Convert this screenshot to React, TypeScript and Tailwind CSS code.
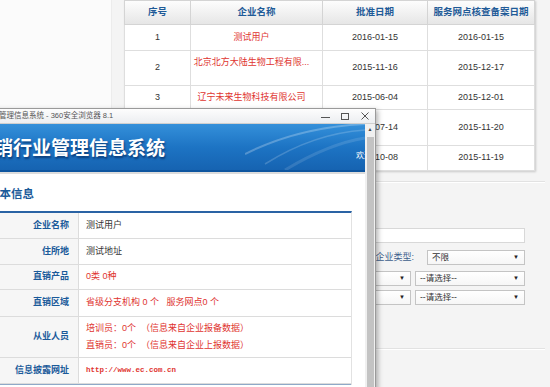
import React from 'react';

interface Row {
  no: number;
  name: string;
  approved: string;
  checked: string;
  h: string;
  lift?: boolean;
}

const rows: Row[] = [
  { no: 1, name: '测试用户', approved: '2016-01-15', checked: '2016-01-15', h: 'h-[26px]' },
  { no: 2, name: '北京北方大陆生物工程有限...', approved: '2015-11-16', checked: '2015-12-17', h: 'h-[35px]', lift: true },
  { no: 3, name: '辽宁未来生物科技有限公司', approved: '2015-06-04', checked: '2015-12-01', h: 'h-[24px]' },
  { no: 4, name: '吉林省康源生物技术有限...', approved: '2015-07-14', checked: '2015-11-20', h: 'h-[36px]', lift: true },
  { no: 5, name: '天津天狮生物发展有限公司', approved: '2015-10-08', checked: '2015-11-19', h: 'h-[25px]' },
];

const Select = ({ text, className = '' }: { text: string; className?: string }) => (
  <div
    className={`h-[15px] flex items-center justify-between border border-[#c4c4c4] bg-gradient-to-b from-white to-[#f6f6f6] pl-[4px] pr-[5px] text-[8.5px] text-[#333] ${className}`}
  >
    <span>{text}</span>
    <span className="text-[6px] text-[#222]">▼</span>
  </div>
);

const InfoRow = ({ label, h, children }: { label: string; h: string; children: React.ReactNode }) => (
  <div className={`flex border-b border-[#dcdcdc] ${h}`}>
    <div className="w-[91px] shrink-0 bg-[#f6f6f6] border-r border-[#dcdcdc] flex items-center justify-end pr-[9px] text-[9px] font-bold text-[#1a5a9a]">
      {label}
    </div>
    <div className="flex-1 flex flex-col justify-center pl-[7px] text-[9px] gap-[4px]">{children}</div>
  </div>
);

export default function App() {
  return (
    <div className="relative w-[550px] h-[387px] overflow-hidden bg-[#f4f4f4] font-['Liberation_Sans','Noto_Sans_CJK_SC',sans-serif]">
      {/* background page */}
      <div className="flex h-full">
        <div className="w-[112px] shrink-0 bg-[#fbfbfb] border-r border-[#ececec]" />
        <div className="flex-1 pl-[12px]">
          <table className="table-fixed border-collapse w-[410px] bg-white shadow-[1px_1px_2px_rgba(0,0,0,0.18)] text-[9px] text-[#333]">
            <colgroup>
              <col className="w-[66px]" />
              <col className="w-[132px]" />
              <col className="w-[105px]" />
              <col className="w-[107px]" />
            </colgroup>
            <thead>
              <tr className="h-[24px] bg-gradient-to-b from-[#fdfdfd] to-[#e5e5e5]">
                {['序号', '企业名称', '批准日期', '服务网点核查备案日期'].map((t) => (
                  <th key={t} className="border border-[#d4d4d4] text-[9.5px] font-bold text-[#1f5b98] text-center">
                    {t}
                  </th>
                ))}
              </tr>
            </thead>
            <tbody>
              {rows.map((r) => (
                <tr key={r.no} className={r.h}>
                  <td className="border border-[#dedede] text-center">{r.no}</td>
                  <td className={`border border-[#dedede] text-center pr-[10px] text-[#e0342f] ${r.lift ? 'pb-[10px]' : ''}`}>
                    {r.name}
                  </td>
                  <td className="border border-[#dedede] text-center">{r.approved}</td>
                  <td className="border border-[#dedede] text-center">{r.checked}</td>
                </tr>
              ))}
            </tbody>
          </table>

          <div className="mt-[10px] mr-[5px] border-t border-[#e2e2e2] border-b border-b-white" />

          <div className="w-[401px] mt-[45px] flex flex-col">
            <div className="ml-auto w-[305px] h-[15px] border border-[#d8d8d8] bg-white" />
            <div className="mt-[7px] flex items-center justify-end">
              <span className="text-[9px] text-[#3d5f8c]">企业类型:</span>
              <Select text="不限" className="ml-[13px] w-[98px]" />
            </div>
            <div className="mt-[6px] flex justify-end gap-[4px]">
              <Select text="--请选择--" className="w-[100px]" />
              <Select text="--请选择--" className="w-[110px]" />
            </div>
            <div className="mt-[4px] flex justify-end gap-[4px]">
              <Select text="--请选择--" className="w-[100px]" />
              <Select text="--请选择--" className="w-[110px]" />
            </div>
          </div>

          <div className="mt-[43px] mr-[5px] border-t border-[#e2e2e2] border-b border-b-white" />
        </div>
      </div>

      {/* popup window */}
      <div className="absolute left-[-30px] top-[108px] w-[406px] h-[290px] bg-white border border-[#9a9a9a] shadow-[2px_2px_5px_rgba(0,0,0,0.3)] flex flex-col">
        <div className="h-[15px] shrink-0 flex items-center bg-gradient-to-b from-[#fdfdfd] to-[#eceef1] border-b border-[#cfcfcf]">
          <span className="ml-[-2px] text-[7.5px] text-[#555] whitespace-nowrap">直销行业管理信息系统 - 360安全浏览器 8.1</span>
          <div className="ml-auto flex h-full">
            <div className="w-[20px] flex items-center justify-center">
              <div className="w-[9px] h-px bg-[#555] mt-[3px]" />
            </div>
            <div className="w-[20px] flex items-center justify-center">
              <div className="w-[8px] h-[7px] border border-[#555]" />
            </div>
            <div className="w-[20px] flex items-center justify-center">
              <svg width="8" height="8" viewBox="0 0 8 8" className="text-[#555]">
                <path d="M0.5 0.5 L7.5 7.5 M7.5 0.5 L0.5 7.5" stroke="currentColor" strokeWidth="1" />
              </svg>
            </div>
          </div>
        </div>

        <div className="flex flex-1 min-h-0">
          <div className="flex-1 min-w-0 overflow-hidden">
            <div className="relative h-[48px] overflow-hidden bg-gradient-to-b from-[#3490da] via-[#1d74c4] to-[#1663b1] border-b-[2px] border-[#0d559f] flex items-center pl-[4px] pt-[4px]">
              <svg className="absolute right-0 top-0" width="120" height="46" viewBox="0 0 120 46">
                <path d="M0 30 C40 10 80 2 120 0" stroke="rgba(255,255,255,0.25)" strokeWidth="2" fill="none" />
                <path d="M20 40 C55 18 90 8 120 6" stroke="rgba(255,255,255,0.18)" strokeWidth="1.5" fill="none" />
                <path d="M40 46 C70 28 95 18 120 14" stroke="rgba(255,255,255,0.12)" strokeWidth="3" fill="none" />
              </svg>
              <span className="relative text-[19px] font-bold text-white whitespace-nowrap [text-shadow:1px_2px_2px_rgba(0,30,80,0.6)]">
                直销行业管理信息系统
              </span>
              <span className="absolute right-[-7px] bottom-[8px] text-[8px] text-white whitespace-nowrap">欢迎</span>
            </div>
            <div className="h-[2px] bg-[#dcdcdc]" />

            <div className="pl-[17px] pr-[13px]">
              <div className="mt-[12px] text-[11.5px] font-bold text-[#1a5a9a] leading-[16px]">基本信息</div>
              <div className="mt-[9px] border-t-[2px] border-[#2a63a4] border-r border-r-[#e2e2e2]">
                <InfoRow label="企业名称" h="h-[26px]">
                  <span className="text-[#333]">测试用户</span>
                </InfoRow>
                <InfoRow label="住所地" h="h-[26px]">
                  <span className="text-[#333]">测试地址</span>
                </InfoRow>
                <InfoRow label="直销产品" h="h-[25px]">
                  <span className="text-[#e0342f]">0类 0种</span>
                </InfoRow>
                <InfoRow label="直销区域" h="h-[27px]">
                  <span className="text-[#e0342f] whitespace-pre">省级分支机构 0 个   服务网点0 个</span>
                </InfoRow>
                <InfoRow label="从业人员" h="h-[41px]">
                  <span className="text-[#e0342f] whitespace-pre">培训员：0个  （信息来自企业报备数据）</span>
                  <span className="text-[#e0342f] whitespace-pre">直销员：0个  （信息来自企业上报数据）</span>
                </InfoRow>
                <div className="border-b border-[#8fa9c8]">
                  <InfoRow label="信息披露网址" h="h-[26px]">
                    <span className="text-[#e0342f] text-[7.5px] font-['Liberation_Mono',monospace] font-bold">http://www.ec.com.cn</span>
                  </InfoRow>
                </div>
              </div>
            </div>
          </div>

          <div className="w-[10px] shrink-0 bg-[#f0f0f0] flex flex-col items-center">
            <span className="mt-[3px] text-[5px] text-[#444] leading-none">▲</span>
            <div className="mt-[5px] w-[7px] flex-1 bg-[#c3c3c3]" />
          </div>
        </div>
      </div>
    </div>
  );
}
